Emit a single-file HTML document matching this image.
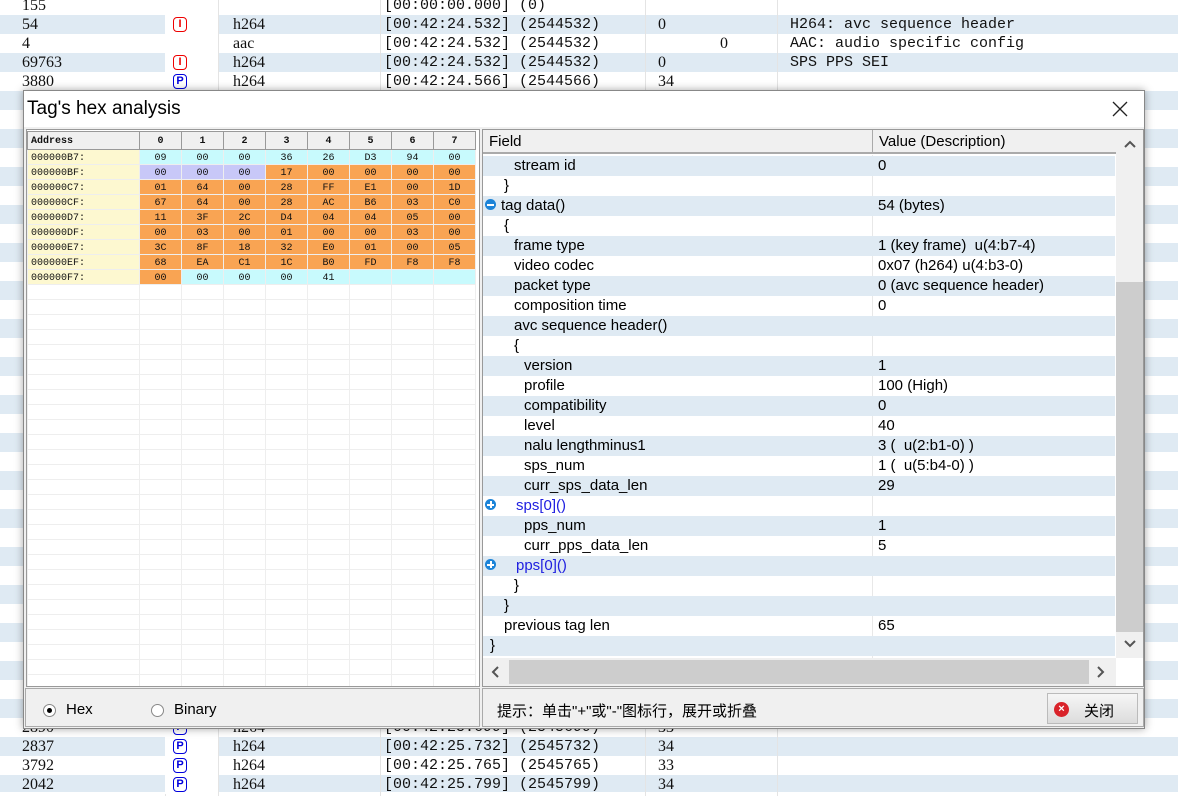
<!DOCTYPE html><html><head><meta charset="utf-8"><style>
*{margin:0;padding:0;box-sizing:border-box}
body{width:1178px;height:796px;overflow:hidden;position:relative;background:#fff;font-family:"Liberation Sans","Noto Sans CJK SC",sans-serif}
.bg{position:absolute;left:0;top:0;width:1178px;height:796px;background:repeating-linear-gradient(to bottom,#fff 0 19px,#dfeaf3 19px 38px);background-position:0 -4px}
.bgr{position:absolute;left:0;height:19px;width:1178px;font-family:"Liberation Serif","Noto Serif CJK SC",serif;font-size:16px;color:#111;line-height:19px}
.bgr span{position:absolute;white-space:pre}
.mono{font-family:"Liberation Mono",monospace!important;font-size:15px}
.ic{position:absolute;left:165px;width:53px;top:0;height:19px;background:#fff}
.ic b{position:absolute;left:8px;top:2px;width:14px;height:15px;border:1.5px solid;border-radius:4px;font:bold 11px/12px "Liberation Sans";text-align:center}
.vl{position:absolute;top:0;height:796px;width:1px;background:#e4e4e4}
.dlg{position:absolute;left:23px;top:90px;width:1122px;height:639px;background:#f0f0f0;border:1px solid #888;box-shadow:0 0 8px rgba(0,0,0,.35)}
.title{position:absolute;left:0;top:0;width:1120px;height:36px;background:#fff;font-size:19px;line-height:36px;padding-left:3px;color:#000}
.hex{position:absolute;left:2px;top:38px;width:454px;height:558px;background:#fff;border:1px solid #999;overflow:hidden}
.hex table{border-collapse:collapse;font-family:"Liberation Mono",monospace;font-size:10px;table-layout:fixed;margin-top:1px}
.hex td{height:15px;border:1px solid #eee;text-align:center;color:#111;padding:0;padding-top:2px}
.hex td.a{text-align:left;padding-left:3px;background:#fdf8d0}
.hex tr.h td{height:18px;background:#f0f0f0;border:1px solid #999;font-weight:bold;font-size:10px}
.c{background:#c8fafd}.l{background:#c8c8f8}.o{background:#f9a453}
.tree{position:absolute;left:458px;top:38px;width:662px;height:558px;background:#fff;border:1px solid #999;overflow:hidden;font-size:15px}
.th{position:absolute;top:0;left:0;height:24px;width:633px;background:#f0f0f0;border-bottom:2px solid #aaa;line-height:24px}
.th span{position:absolute;top:0}
.r{position:absolute;left:0;width:632px;height:20px;line-height:20px;white-space:pre}
.r.b{background:#dfeaf3}
.r span{position:absolute;top:0}
.r .v{left:395px}
.cd{position:absolute;left:389px;top:0;width:1px;height:528px;background:#e8e8e8}
.pm{position:absolute;left:2px;top:3px;width:11px;height:11px;border-radius:50%;background:#1c84d8}
.pm:before{content:"";position:absolute;left:2px;top:4.5px;width:7px;height:2px;background:#fff}
.pm.p:after{content:"";position:absolute;left:4.5px;top:2px;width:2px;height:7px;background:#fff}
.blue{color:#2020e0}
.vs{position:absolute;left:633px;top:0;width:27px;height:528px;background:#f0f0f0}
.hs{position:absolute;left:0;top:528px;width:633px;height:28px;background:#f0f0f0}
.bp{position:absolute;top:597px;height:39px;border:1px solid #aaa;background:#f0f0f0;font-size:15px}
.rad{position:absolute;top:15px;width:13px;height:13px;border-radius:50%;border:1px solid #888;background:#fff}
</style></head><body>
<div class="bg"></div>
<div class="vl" style="left:165px"></div><div class="vl" style="left:218px"></div><div class="vl" style="left:380px"></div><div class="vl" style="left:645px"></div><div class="vl" style="left:777px"></div>

<div class="bgr" style="top:-4px"><div class="ic"></div><span style="left:22px">155</span><span class="mono" style="left:384px">[00:00:00.000] (0)</span></div>
<div class="bgr" style="top:15px"><div class="ic"><b style="color:#e00;border-color:#e00">I</b></div><span style="left:22px">54</span><span style="left:233px">h264</span><span class="mono" style="left:384px">[00:42:24.532] (2544532)</span><span style="left:658px">0</span><span class="mono" style="left:790px">H264: avc sequence header</span></div>
<div class="bgr" style="top:34px"><div class="ic"></div><span style="left:22px">4</span><span style="left:233px">aac</span><span class="mono" style="left:384px">[00:42:24.532] (2544532)</span><span style="left:720px">0</span><span class="mono" style="left:790px">AAC: audio specific config</span></div>
<div class="bgr" style="top:53px"><div class="ic"><b style="color:#e00;border-color:#e00">I</b></div><span style="left:22px">69763</span><span style="left:233px">h264</span><span class="mono" style="left:384px">[00:42:24.532] (2544532)</span><span style="left:658px">0</span><span class="mono" style="left:790px">SPS PPS SEI</span></div>
<div class="bgr" style="top:72px"><div class="ic"><b style="color:#00d;border-color:#00d">P</b></div><span style="left:22px">3880</span><span style="left:233px">h264</span><span class="mono" style="left:384px">[00:42:24.566] (2544566)</span><span style="left:658px">34</span></div>
<div class="bgr" style="top:718px"><div class="ic"><b style="color:#00d;border-color:#00d">P</b></div><span style="left:22px">2890</span><span style="left:233px">h264</span><span class="mono" style="left:384px">[00:42:25.699] (2545699)</span><span style="left:658px">33</span></div>
<div class="bgr" style="top:737px"><div class="ic"><b style="color:#00d;border-color:#00d">P</b></div><span style="left:22px">2837</span><span style="left:233px">h264</span><span class="mono" style="left:384px">[00:42:25.732] (2545732)</span><span style="left:658px">34</span></div>
<div class="bgr" style="top:756px"><div class="ic"><b style="color:#00d;border-color:#00d">P</b></div><span style="left:22px">3792</span><span style="left:233px">h264</span><span class="mono" style="left:384px">[00:42:25.765] (2545765)</span><span style="left:658px">33</span></div>
<div class="bgr" style="top:775px"><div class="ic"><b style="color:#00d;border-color:#00d">P</b></div><span style="left:22px">2042</span><span style="left:233px">h264</span><span class="mono" style="left:384px">[00:42:25.799] (2545799)</span><span style="left:658px">34</span></div>

<div class="dlg">
<div class="title">Tag's hex analysis<svg style="position:absolute;left:1088px;top:10px" width="16" height="16"><path d="M1 1L15 15M15 1L1 15" stroke="#222" stroke-width="1.3"/></svg></div>
<div class="hex"><table>
<colgroup><col style="width:112px"><col style="width:42px"><col style="width:42px"><col style="width:42px"><col style="width:42px"><col style="width:42px"><col style="width:42px"><col style="width:42px"><col style="width:42px"></colgroup>
<tr class="h"><td class="a" style="background:#f0f0f0">Address</td><td>0</td><td>1</td><td>2</td><td>3</td><td>4</td><td>5</td><td>6</td><td>7</td></tr>
<tr><td class="a">000000B7:</td><td class="c">09</td><td class="c">00</td><td class="c">00</td><td class="c">36</td><td class="c">26</td><td class="c">D3</td><td class="c">94</td><td class="c">00</td></tr>
<tr><td class="a">000000BF:</td><td class="l">00</td><td class="l">00</td><td class="l">00</td><td class="o">17</td><td class="o">00</td><td class="o">00</td><td class="o">00</td><td class="o">00</td></tr>
<tr><td class="a">000000C7:</td><td class="o">01</td><td class="o">64</td><td class="o">00</td><td class="o">28</td><td class="o">FF</td><td class="o">E1</td><td class="o">00</td><td class="o">1D</td></tr>
<tr><td class="a">000000CF:</td><td class="o">67</td><td class="o">64</td><td class="o">00</td><td class="o">28</td><td class="o">AC</td><td class="o">B6</td><td class="o">03</td><td class="o">C0</td></tr>
<tr><td class="a">000000D7:</td><td class="o">11</td><td class="o">3F</td><td class="o">2C</td><td class="o">D4</td><td class="o">04</td><td class="o">04</td><td class="o">05</td><td class="o">00</td></tr>
<tr><td class="a">000000DF:</td><td class="o">00</td><td class="o">03</td><td class="o">00</td><td class="o">01</td><td class="o">00</td><td class="o">00</td><td class="o">03</td><td class="o">00</td></tr>
<tr><td class="a">000000E7:</td><td class="o">3C</td><td class="o">8F</td><td class="o">18</td><td class="o">32</td><td class="o">E0</td><td class="o">01</td><td class="o">00</td><td class="o">05</td></tr>
<tr><td class="a">000000EF:</td><td class="o">68</td><td class="o">EA</td><td class="o">C1</td><td class="o">1C</td><td class="o">B0</td><td class="o">FD</td><td class="o">F8</td><td class="o">F8</td></tr>
<tr><td class="a">000000F7:</td><td class="o">00</td><td class="c">00</td><td class="c">00</td><td class="c">00</td><td class="c">41</td><td class="c"></td><td class="c"></td><td class="c"></td></tr>
<tr><td></td><td></td><td></td><td></td><td></td><td></td><td></td><td></td><td></td></tr>
<tr><td></td><td></td><td></td><td></td><td></td><td></td><td></td><td></td><td></td></tr>
<tr><td></td><td></td><td></td><td></td><td></td><td></td><td></td><td></td><td></td></tr>
<tr><td></td><td></td><td></td><td></td><td></td><td></td><td></td><td></td><td></td></tr>
<tr><td></td><td></td><td></td><td></td><td></td><td></td><td></td><td></td><td></td></tr>
<tr><td></td><td></td><td></td><td></td><td></td><td></td><td></td><td></td><td></td></tr>
<tr><td></td><td></td><td></td><td></td><td></td><td></td><td></td><td></td><td></td></tr>
<tr><td></td><td></td><td></td><td></td><td></td><td></td><td></td><td></td><td></td></tr>
<tr><td></td><td></td><td></td><td></td><td></td><td></td><td></td><td></td><td></td></tr>
<tr><td></td><td></td><td></td><td></td><td></td><td></td><td></td><td></td><td></td></tr>
<tr><td></td><td></td><td></td><td></td><td></td><td></td><td></td><td></td><td></td></tr>
<tr><td></td><td></td><td></td><td></td><td></td><td></td><td></td><td></td><td></td></tr>
<tr><td></td><td></td><td></td><td></td><td></td><td></td><td></td><td></td><td></td></tr>
<tr><td></td><td></td><td></td><td></td><td></td><td></td><td></td><td></td><td></td></tr>
<tr><td></td><td></td><td></td><td></td><td></td><td></td><td></td><td></td><td></td></tr>
<tr><td></td><td></td><td></td><td></td><td></td><td></td><td></td><td></td><td></td></tr>
<tr><td></td><td></td><td></td><td></td><td></td><td></td><td></td><td></td><td></td></tr>
<tr><td></td><td></td><td></td><td></td><td></td><td></td><td></td><td></td><td></td></tr>
<tr><td></td><td></td><td></td><td></td><td></td><td></td><td></td><td></td><td></td></tr>
<tr><td></td><td></td><td></td><td></td><td></td><td></td><td></td><td></td><td></td></tr>
<tr><td></td><td></td><td></td><td></td><td></td><td></td><td></td><td></td><td></td></tr>
<tr><td></td><td></td><td></td><td></td><td></td><td></td><td></td><td></td><td></td></tr>
<tr><td></td><td></td><td></td><td></td><td></td><td></td><td></td><td></td><td></td></tr>
<tr><td></td><td></td><td></td><td></td><td></td><td></td><td></td><td></td><td></td></tr>
<tr><td></td><td></td><td></td><td></td><td></td><td></td><td></td><td></td><td></td></tr>
<tr><td></td><td></td><td></td><td></td><td></td><td></td><td></td><td></td><td></td></tr>
<tr><td></td><td></td><td></td><td></td><td></td><td></td><td></td><td></td><td></td></tr>
</table></div>

<div class="tree">
<div class="th"><span style="left:6px">Field</span><span style="left:389px;border-left:1px solid #aaa;padding-left:6px;height:24px">Value (Description)</span></div>
<div class="cd" style="top:25px"></div>
<div style="position:absolute;left:0;top:26px;width:633px">
<div class="r b" style="top:0"><span style="left:31px">stream id</span><span class="v">0</span></div>
<div class="r" style="top:20px"><span style="left:21px">}</span></div>
<div class="r b" style="top:40px"><i class="pm"></i><span style="left:18px">tag data()</span><span class="v">54 (bytes)</span></div>
<div class="r" style="top:60px"><span style="left:21px">{</span></div>
<div class="r b" style="top:80px"><span style="left:31px">frame type</span><span class="v">1 (key frame)  u(4:b7-4)</span></div>
<div class="r" style="top:100px"><span style="left:31px">video codec</span><span class="v">0x07 (h264) u(4:b3-0)</span></div>
<div class="r b" style="top:120px"><span style="left:31px">packet type</span><span class="v">0 (avc sequence header)</span></div>
<div class="r" style="top:140px"><span style="left:31px">composition time</span><span class="v">0</span></div>
<div class="r b" style="top:160px"><span style="left:31px">avc sequence header()</span></div>
<div class="r" style="top:180px"><span style="left:31px">{</span></div>
<div class="r b" style="top:200px"><span style="left:41px">version</span><span class="v">1</span></div>
<div class="r" style="top:220px"><span style="left:41px">profile</span><span class="v">100 (High)</span></div>
<div class="r b" style="top:240px"><span style="left:41px">compatibility</span><span class="v">0</span></div>
<div class="r" style="top:260px"><span style="left:41px">level</span><span class="v">40</span></div>
<div class="r b" style="top:280px"><span style="left:41px">nalu lengthminus1</span><span class="v">3 (  u(2:b1-0) )</span></div>
<div class="r" style="top:300px"><span style="left:41px">sps_num</span><span class="v">1 (  u(5:b4-0) )</span></div>
<div class="r b" style="top:320px"><span style="left:41px">curr_sps_data_len</span><span class="v">29</span></div>
<div class="r" style="top:340px"><i class="pm p"></i><span class="blue" style="left:33px">sps[0]()</span></div>
<div class="r b" style="top:360px"><span style="left:41px">pps_num</span><span class="v">1</span></div>
<div class="r" style="top:380px"><span style="left:41px">curr_pps_data_len</span><span class="v">5</span></div>
<div class="r b" style="top:400px"><i class="pm p"></i><span class="blue" style="left:33px">pps[0]()</span></div>
<div class="r" style="top:420px"><span style="left:31px">}</span></div>
<div class="r b" style="top:440px"><span style="left:21px">}</span></div>
<div class="r" style="top:460px"><span style="left:21px">previous tag len</span><span class="v">65</span></div>
<div class="r b" style="top:480px"><span style="left:7px">}</span></div>
</div>
<div class="vs"><div style="position:absolute;left:0;top:152px;width:27px;height:350px;background:#cdcdcd"></div>
<svg style="position:absolute;left:8px;top:10px" width="12" height="8"><path d="M1 7L6 2L11 7" stroke="#555" stroke-width="2" fill="none"/></svg>
<svg style="position:absolute;left:8px;top:510px" width="12" height="8"><path d="M1 1L6 6L11 1" stroke="#555" stroke-width="2" fill="none"/></svg></div>
<div class="hs"><div style="position:absolute;left:26px;top:2px;width:580px;height:24px;background:#cdcdcd"></div>
<svg style="position:absolute;left:8px;top:8px" width="8" height="12"><path d="M7 1L2 6L7 11" stroke="#555" stroke-width="2" fill="none"/></svg>
<svg style="position:absolute;left:614px;top:8px" width="8" height="12"><path d="M1 1L6 6L1 11" stroke="#555" stroke-width="2" fill="none"/></svg></div>
</div>

<div class="bp" style="left:1px;width:455px"><span class="rad" style="left:17px"><i style="position:absolute;left:3px;top:3px;width:5px;height:5px;border-radius:50%;background:#000"></i></span><span style="position:absolute;left:40px;top:12px">Hex</span><span class="rad" style="left:125px"></span><span style="position:absolute;left:148px;top:12px">Binary</span></div>
<div class="bp" style="left:458px;width:662px"><span style="position:absolute;left:14px;top:11px">提示：单击"+"或"-"图标行，展开或折叠</span>
<div style="position:absolute;left:564px;top:4px;width:91px;height:31px;border:1px solid #bbb;background:linear-gradient(#f6f6f6,#dcdcdc)"><i style="position:absolute;left:6px;top:8px;width:15px;height:15px;border-radius:50%;background:#d9232a;color:#fff;font:bold 11px/15px 'Liberation Sans';text-align:center;font-style:normal">×</i><span style="position:absolute;left:36px;top:6px">关闭</span></div></div>
</div>
</body></html>
